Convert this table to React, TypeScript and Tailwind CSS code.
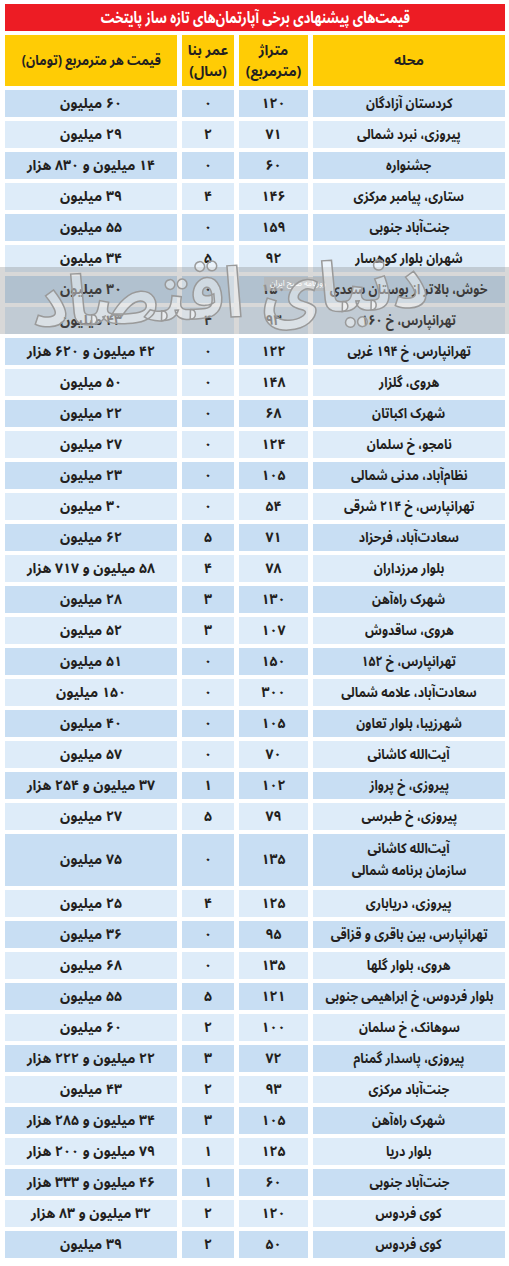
const rows: [string, string, string, string][] = [
  ["کردستان آزادگان", "۱۲۰", "۰", "۶۰ میلیون"],
  ["پیروزی، نبرد شمالی", "۷۱", "۲", "۲۹ میلیون"],
  ["جشنواره", "۶۰", "۰", "۱۴ میلیون و ۸۳۰ هزار"],
  ["ستاری، پیامبر مرکزی", "۱۴۶", "۴", "۳۹ میلیون"],
  ["جنت\u200cآباد جنوبی", "۱۵۹", "۰", "۵۵ میلیون"],
  ["شهران بلوار کوهسار", "۹۲", "۵", "۳۴ میلیون"],
  ["خوش، بالاتر از بوستان سعدی", "۱۵۰", "۰", "۳۰ میلیون"],
  ["تهرانپارس، خ ۱۶۰", "۹۳", "۴", "۴۳ میلیون"],
  ["تهرانپارس، خ ۱۹۴ غربی", "۱۲۲", "۰", "۴۲ میلیون و ۶۲۰ هزار"],
  ["هروی، گلزار", "۱۴۸", "۰", "۵۰ میلیون"],
  ["شهرک اکباتان", "۶۸", "۰", "۲۲ میلیون"],
  ["نامجو، خ سلمان", "۱۲۴", "۰", "۲۷ میلیون"],
  ["نظام\u200cآباد، مدنی شمالی", "۱۰۵", "۰", "۲۳ میلیون"],
  ["تهرانپارس، خ ۲۱۴ شرقی", "۵۴", "۰", "۳۰ میلیون"],
  ["سعادت\u200cآباد، فرحزاد", "۷۱", "۵", "۶۲ میلیون"],
  ["بلوار مرزداران", "۷۸", "۴", "۵۸ میلیون و ۷۱۷ هزار"],
  ["شهرک راه\u200cآهن", "۱۳۰", "۳", "۲۸ میلیون"],
  ["هروی، ساقدوش", "۱۰۷", "۳", "۵۲ میلیون"],
  ["تهرانپارس، خ ۱۵۲", "۱۵۰", "۰", "۵۱ میلیون"],
  ["سعادت\u200cآباد، علامه شمالی", "۳۰۰", "۰", "۱۵۰ میلیون"],
  ["شهرزیبا، بلوار تعاون", "۱۰۵", "۰", "۴۰ میلیون"],
  ["آیت\u200cالله کاشانی", "۷۰", "۰", "۵۷ میلیون"],
  ["پیروزی، خ پرواز", "۱۰۲", "۱", "۳۷ میلیون و ۲۵۴ هزار"],
  ["پیروزی، خ طبرسی", "۷۹", "۵", "۲۷ میلیون"],
  ["آیت\u200cالله کاشانی\nسازمان برنامه  شمالی", "۱۳۵", "۰", "۷۵ میلیون"],
  ["پیروزی، دریاباری", "۱۲۵", "۴", "۲۵ میلیون"],
  ["تهرانپارس، بین باقری و قزاقی", "۹۵", "۰", "۳۶ میلیون"],
  ["هروی، بلوار گلها", "۱۳۵", "۰", "۶۸ میلیون"],
  ["بلوار فردوس، خ ابراهیمی جنوبی", "۱۲۱", "۵", "۵۵ میلیون"],
  ["سوهانک، خ سلمان", "۱۰۰", "۲", "۶۰ میلیون"],
  ["پیروزی، پاسدار گمنام", "۷۲", "۳", "۲۲ میلیون و ۲۲۲ هزار"],
  ["جنت\u200cآباد مرکزی", "۹۳", "۲", "۴۳ میلیون"],
  ["شهرک راه\u200cآهن", "۱۰۵", "۳", "۳۴ میلیون و ۲۸۵ هزار"],
  ["بلوار دریا", "۱۲۵", "۱", "۷۹ میلیون و ۲۰۰ هزار"],
  ["جنت\u200cآباد جنوبی", "۶۰", "۱", "۴۶ میلیون و ۳۳۳ هزار"],
  ["کوی فردوس", "۱۲۰", "۲", "۳۲ میلیون و ۸۳ هزار"],
  ["کوی فردوس", "۵۰", "۲", "۳۹ میلیون"],
];

function HeadCell({ children }: { children: React.ReactNode }) {
  return (
    <div className="h-[51px] bg-[#ffcc05] flex flex-col items-center justify-center text-[14px] leading-[21px] font-bold text-[#231f20] whitespace-nowrap">
      {children}
    </div>
  );
}

export default function App() {
  return (
    <div dir="rtl" className="relative w-[509px] bg-white pt-[4px] pb-[8px] pr-[4px] pl-[5px] font-['Noto_Sans_Arabic','DejaVu_Sans',sans-serif]">
      <div className="grid grid-cols-[192px_69px_52px_172px] gap-x-[5px] gap-y-[4px]">
        <div className="col-span-4 h-[27px] bg-[#ed1c24] text-white font-bold text-[16px] flex items-center justify-center">
          <span className="inline-block scale-x-[0.8]">
            {"قیمت\u200cهای پیشنهادی برخی آپارتمان\u200cهای تازه ساز پایتخت"}
          </span>
        </div>

        <HeadCell>محله</HeadCell>
        <HeadCell>
          <span>متراژ</span>
          <span>(مترمربع)</span>
        </HeadCell>
        <HeadCell>
          <span>عمر بنا</span>
          <span>(سال)</span>
        </HeadCell>
        <HeadCell>
          <span className="inline-block scale-x-[0.9]">قیمت هر مترمربع (تومان)</span>
        </HeadCell>

        {rows.map((r, i) => {
          const bg = i % 2 === 0 ? "bg-[#c8def3]" : "bg-[#deecf9]";
          const h = r[0].includes("\n") ? "h-[52px]" : "h-[27px]";
          return r.map((cell, j) => (
            <div
              key={`${i}-${j}`}
              className={`${bg} ${h} flex flex-col items-center justify-center text-[14px] leading-[22px] font-bold text-[#231f20] whitespace-nowrap`}
            >
              {cell.split("\n").map((line, k) => (
                <span key={k} className={j === 0 ? "inline-block scale-x-[0.88]" : ""}>
                  {line}
                </span>
              ))}
            </div>
          ));
        })}
      </div>

      {/* watermark */}
      <div className="absolute left-0 right-0 top-[267px] h-[67px] bg-[#7d7d7d]/30 pointer-events-none" />
      <div className="absolute left-[264px] top-[277px] bg-[#b5b5b5]/70 text-white text-[8px] px-[6px] py-[1px] pointer-events-none">
        روزنامه صبح ایران
      </div>
      <div className="absolute left-[20px] top-[245px] w-[420px] text-center whitespace-nowrap text-[70px] leading-[100px] font-bold text-white/40 [-webkit-text-stroke:1.5px_#9a9a9a] rotate-[-3deg] pointer-events-none">
        دنیای اقتصاد
      </div>
    </div>
  );
}
